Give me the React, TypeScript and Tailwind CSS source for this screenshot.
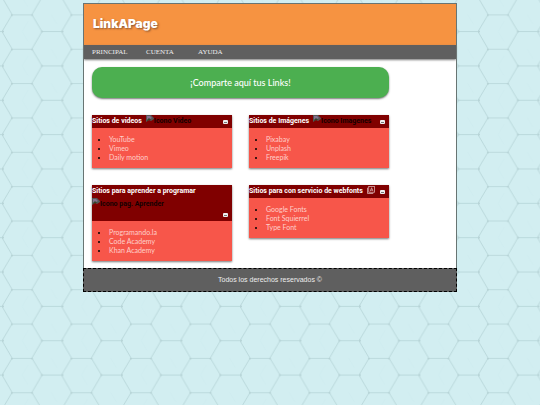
import React from "react";

type LinkCardProps = {
    title: string;
    links: string[];
    alt?: string;
    tall?: boolean;
    children?: React.ReactNode;
}

const HexBackground = () => (
    <svg className="fixed inset-0 -z-10 w-full h-full" aria-hidden="true">
        <defs>
            <pattern id="hex" x="2" y="14.4" width="59.5" height="34.35" patternUnits="userSpaceOnUse">
                <path d="M0 17.2L10 0.4H30L40 17.2H59.5M0 17.2L10 34.35M30 34.35L40 17.2" fill="none" stroke="#b0cfd2" strokeWidth="0.7"/>
                <path d="M20 17L26 7M20 17L26 27M49 0L55 10" fill="none" stroke="#cceaed" strokeWidth="0.5"/>
                <g fill="#b4d1d4">
                    <circle cx="1" cy="17.2" r="1"/>
                    <circle cx="40" cy="17.2" r="1"/>
                    <circle cx="10" cy="0.6" r="1"/>
                    <circle cx="30" cy="0.6" r="1"/>
                </g>
            </pattern>
        </defs>
        <rect width="100%" height="100%" fill="#d2eef1"/>
        <rect width="100%" height="100%" fill="url(#hex)"/>
    </svg>
);

const BrokenImage = () => (
    <svg className="w-2 h-2 shrink-0" viewBox="0 0 8 8" aria-hidden="true">
        <path d="M0 0H5L8 3V4L5 6L3 5L0 7Z" fill="#555"/>
        <path d="M1 1H4L6 3L4 4L1 5Z" fill="#84718f"/>
        <path d="M1 5L3 3L5 5L3 5L1 6Z" fill="#2f492b"/>
    </svg>
);

const FontIcon = () => (
    <svg className="w-2 h-2 mt-px shrink-0" viewBox="0 0 16 16" fill="none" stroke="#dfb8b8" strokeWidth="1.5" aria-hidden="true">
        <rect x="3.5" y="1" width="11.5" height="11.5"/>
        <path d="M1 3.5V15H12.5"/>
        <path d="M6.5 10.5L9.2 3.5L12 10.5M7.5 8.2H11"/>
    </svg>
);

const LinkCard = ({title, links, alt, tall, children}: LinkCardProps) => (
    <section className="bg-[#f7564a] shadow-[0_1px_2px_#777]">
        <header className={tall ? "flex justify-between h-9 bg-[#800000]" : "flex justify-between h-[13px] bg-[#800000]"}>
            <div className={tall ? "flex flex-col" : "flex gap-1"}>
                <h2 className="font-['Roboto',sans-serif] font-bold text-[7px] leading-[13px] text-white whitespace-nowrap">
                    {title}
                </h2>
                {alt && (
                    <span className="flex font-['Roboto',sans-serif] font-bold text-[7px] leading-[13px] text-[#140000] whitespace-nowrap">
                        <BrokenImage/>{alt}
                    </span>
                )}
                {children}
            </div>
            <button
                aria-label={`Minimizar ${title}`}
                className="flex items-center justify-center self-end w-[5px] h-1 mr-1 mb-1 rounded-[1px] bg-[#eee] shrink-0"
            >
                <span className="w-[3px] h-px bg-[#777]"/>
            </button>
        </header>
        <ul className="list-disc pl-[17px] py-[7px] font-['Lato',sans-serif] text-[7px] leading-2 text-black">
            {links.map((link) => (
                <li key={link} className="h-2 mb-px last:mb-0"><a href="#" className="text-[#ffd0cb]">{link}</a></li>
            ))}
        </ul>
    </section>
);

export default function App() {
    return (
        <div className="px-[83px] pt-[3px]">
            <HexBackground/>
            <div className="border border-b-0 border-[#687573] bg-white">
                <header className="flex items-center h-[41px] px-[9px] pb-[2px] bg-[#f69341]">
                    <h1 className="font-['Inter',sans-serif] font-black text-xs text-white [text-shadow:1px_1px_2px_#875433]">
                        LinkAPage
                    </h1>
                </header>
                <nav className="flex h-[14px] px-2 bg-[#5f5f5f] shadow-[0_1px_2px_#777] font-['Liberation_Serif',serif] text-[7px] leading-[14px] text-[#eee]">
                    <a href="#" className="w-[54px]">PRINCIPAL</a>
                    <a href="#" className="w-[52px]">CUENTA</a>
                    <a href="#">AYUDA</a>
                </nav>
                <main className="pl-2 pr-[67px] pt-2 pb-[7px]">
                    <div className="flex items-center justify-center h-[31px] rounded-[10px] bg-[#4caf50] shadow-[0_1px_2px_#777]">
                        <p className="font-['Lato',sans-serif] text-[9px] font-medium text-white">
                            ¡Comparte aquí tus Links!
                        </p>
                    </div>
                    <div className="grid grid-cols-2 items-start gap-x-[17px] gap-y-[17px] pt-[17px]">
                        <LinkCard title="Sitios de vídeos" alt="Icono Video" links={["YouTube", "Vimeo", "Daily motion"]}/>
                        <LinkCard title="Sitios de Imágenes" alt="Icono Imagenes" links={["Pixabay", "Unplash", "Freepik"]}/>
                        <LinkCard
                            title="Sitios para aprender a programar"
                            alt="Icono pag. Aprender"
                            tall
                            links={["Programando.la", "Code Academy", "Khan Academy"]}
                        />
                        <LinkCard title="Sitios para con servicio de webfonts" links={["Google Fonts", "Font Squierrel", "Type Font"]}>
                            <FontIcon/>
                        </LinkCard>
                    </div>
                </main>
            </div>
            <footer className="flex items-center justify-center h-6 border border-dashed border-black bg-[#5f5f5f] font-['Liberation_Sans',sans-serif] text-[7px] text-[#eee]">
                Todos los derechos reservados ©
            </footer>
        </div>
    );
}
